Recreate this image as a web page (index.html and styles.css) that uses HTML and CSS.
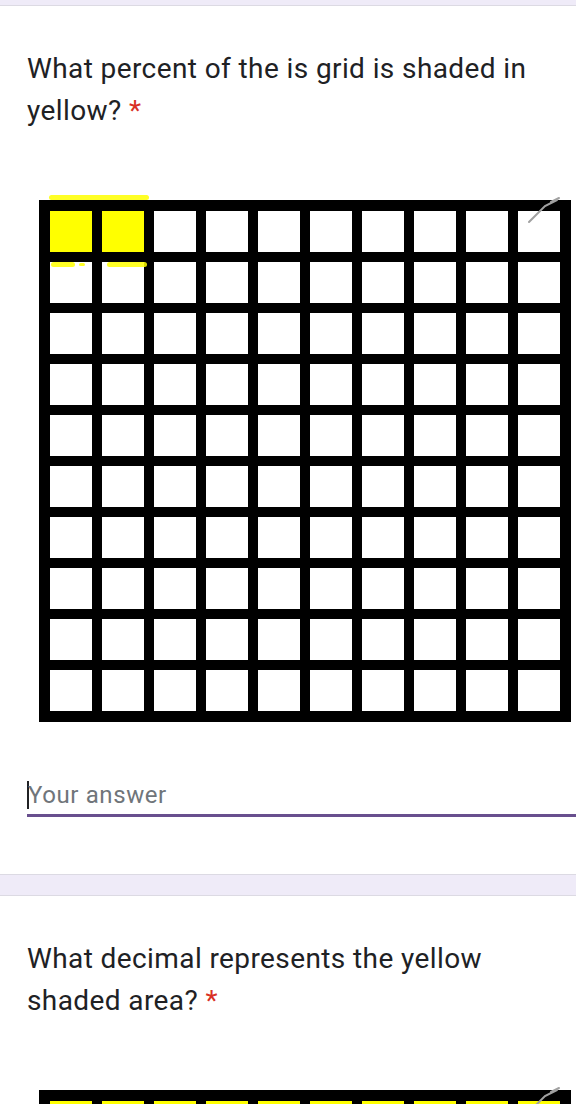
FILE: index.html
```html
<!DOCTYPE html>
<html lang="en">
<head>
    <meta charset="UTF-8">
    <meta name="viewport" content="width=device-width, initial-scale=1.0">
    <title>Quiz</title>
    <link rel="stylesheet" href="styles.css">
</head>
<body>
    <div class="band top"></div>

    <section class="question">
        <h2 class="title">What percent of the is grid is shaded in yellow? <span class="req">*</span></h2>
        <div class="picture">
            <div class="grid" id="grid1"></div>
            <span class="smudge s1"></span>
            <span class="smudge s2"></span>
            <span class="smudge s3"></span>
            <span class="smudge s4"></span>
            <svg class="scribble" width="40" height="40" viewBox="0 0 40 40"><path d="M6 28 L22 12 L34 6 M28 8 L36 4" stroke="#a0a0a0" stroke-width="2" fill="none" stroke-linecap="round"/></svg>
        </div>
        <div class="answer">
            <span class="caret"></span><span class="placeholder">Your answer</span>
        </div>
    </section>

    <div class="band"></div>

    <section class="question">
        <h2 class="title">What decimal represents the yellow shaded area? <span class="req">*</span></h2>
        <div class="picture">
            <div class="grid" id="grid2"></div>
            <svg class="scribble" width="40" height="40" viewBox="0 0 40 40"><path d="M6 28 L22 12 L34 6 M28 8 L36 4" stroke="#a0a0a0" stroke-width="2" fill="none" stroke-linecap="round"/></svg>
        </div>
    </section>

    <script>
        // dibuja las 100 casillas de cada cuadrícula
        function dibujarGrid(id, amarillas) {
            let grid = document.getElementById(id);
            for (let i = 0; i < 100; i++) {
                let celda = document.createElement('div');
                celda.className = amarillas.includes(i) ? 'cell yellow' : 'cell';
                grid.appendChild(celda);
            }
        }

        dibujarGrid('grid1', [0, 1]);
        dibujarGrid('grid2', [0, 1, 2, 3, 4, 5, 6, 7, 8, 9]);
    </script>
</body>
</html>
```

FILE: styles.css
```css
body {
    margin: 0;
    padding: 0;
    background: #fff;
    font-family: Roboto, "Liberation Sans", sans-serif;
    color: #202124;
    overflow: hidden;
}

.band {
    height: 20px;
    background: #efebf8;
    border-top: 1px solid #dcdae3;
    border-bottom: 1px solid #dcdae3;
}

.band.top {
    height: 5px;
    border-top: none;
}

.question {
    padding: 42px 0 57px 27px;
}

.title {
    font-size: 28px;
    font-weight: 400;
    line-height: 42px;
    letter-spacing: 0.4px;
    margin: 0;
    padding-right: 20px;
}

.req {
    color: #d93025;
}

.picture {
    position: relative;
    margin: 68px 0 0 12px;
    width: 532px;
}

.grid {
    display: grid;
    grid-template-columns: repeat(10, 1fr);
    grid-auto-rows: 41px;
    gap: 10px;
    padding: 11px;
    background: #000;
    height: 500px;
}

.cell {
    background: #fff;
}

.cell.yellow {
    background: #ffff00;
}

.smudge {
    position: absolute;
    background: #ffff00;
    border-radius: 3px;
    opacity: 0.85;
}

.s1 { left: 10px; top: -5px; width: 100px; height: 5px; }
.s2 { left: 12px; top: 62px; width: 24px; height: 5px; }
.s3 { left: 68px; top: 62px; width: 40px; height: 5px; }
.s4 { left: 40px; top: 63px; width: 6px; height: 3px; }

.scribble {
    position: absolute;
    right: 8px;
    top: -6px;
}

.answer {
    margin-top: 54px;
    height: 38px;
    border-bottom: 3px solid #684f8e;
    display: flex;
    align-items: center;
}

.caret {
    width: 2px;
    height: 28px;
    background: #202124;
}

.placeholder {
    font-size: 24px;
    letter-spacing: 0.6px;
    color: #70757a;
    margin-left: -1px;
}
```
